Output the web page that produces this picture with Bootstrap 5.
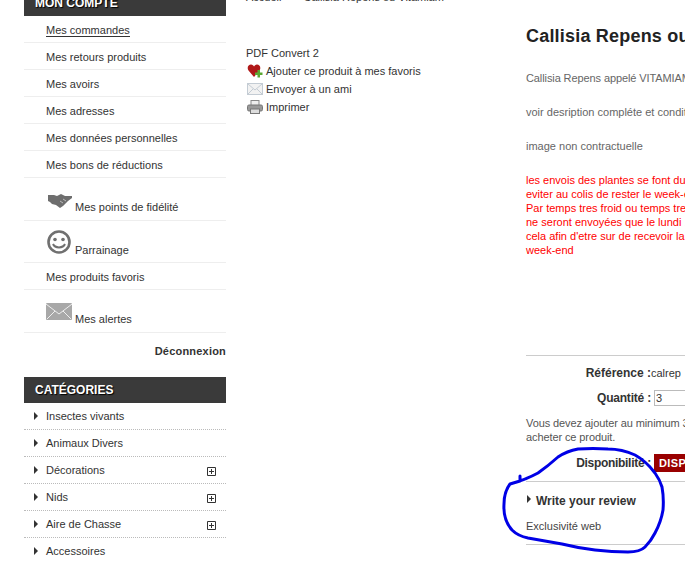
<!DOCTYPE html>
<html lang="fr">
<head>
  <meta charset="UTF-8">
  <title>Callisia Repens</title>
  <link rel="stylesheet" href="https://cdn.jsdelivr.net/npm/bootstrap@5.3.0/dist/css/bootstrap.min.css">
  <style>
    html, body { height: 561px; overflow: hidden; }
    body {
      font-family: "Liberation Sans", Arial, sans-serif;
      font-size: 11px;
      color: #333;
      background: #fff;
    }
    a { color: #333; text-decoration: none; }
    .page-wrap { margin-top: -10px; padding-left: 24px; width: 900px; }
    .side-col { width: 202px; flex: none; }
    .center-col { width: 280px; flex: none; margin-left: 20px; }
    .main-col { width: 400px; flex: none; }
    .block-head {
      background: #3a3a3a;
      color: #fff;
      font-size: 12px;
      font-weight: 700;
      height: 26px;
      line-height: 26px;
      padding-left: 11px;
      text-shadow: 1px 1px 1px #000;
    }
    .acct-row {
      height: 27px;
      line-height: 28px;
      padding-left: 22px;
      border-bottom: 1px solid #eee;
    }
    .acct-row.current a { border-bottom: 1px solid #333; }
    .acct-icon { height: 43px; display: flex; align-items: flex-end; line-height: 1; padding-bottom: 7px; }
    .acct-icon svg { margin-right: 3px; flex: none; }
    .acct-hand { margin-bottom: 5px; margin-left: 2px; margin-right: 3px !important; }
    .acct-smile { height: 42px; padding-bottom: 6px; }
    .acct-smile svg { margin-bottom: 2px; }
    .acct-mail svg { margin-bottom: 5px; }
    .logout { height: 44px; padding-top: 10px; text-align: right; font-weight: 700; letter-spacing: .2px; }
    .cat-row {
      height: 27px;
      line-height: 26px;
      padding-left: 22px;
      border-bottom: 1px dotted #bbb;
      position: relative;
    }
    .cat-row:last-child { border-bottom: 0; }
    .cat-row::before {
      content: "";
      position: absolute;
      left: 10px;
      top: 9px;
      border-left: 4px solid #333;
      border-top: 4px solid transparent;
      border-bottom: 4px solid transparent;
    }
    .cat-plus { position: absolute; left: 183px; top: 10px; }
    .crumb { height: 17px; line-height: 14px; white-space: nowrap; color: #333; }
    .crumb span { margin-left: 22px; }
    .tools { margin-top: 37px; line-height: 18px; }
    .tools > div { height: 18px; display: flex; align-items: center; }
    .tools svg { width: 16px; margin: 0 3px 0 1px; flex: none; }
    .prod-title { font-size: 18px; font-weight: 700; color: #222; margin: 33px 0 0; line-height: 26px; letter-spacing: .2px; white-space: nowrap; }
    .prod-txt { color: #666; line-height: 14px; height: 34px; white-space: nowrap; margin: 0; }
    .prod-first { margin-top: 22px; letter-spacing: -.1px; }
    .prod-red { color: #f00; line-height: 14px; white-space: nowrap; margin: 0; height: 84px; }
    .sep { border-top: 1px solid #ccc; }
    .sep-top { margin-top: 98px; }
    .field-line { display: flex; align-items: center; }
    .field-label { width: 125px; flex: none; text-align: right; font-size: 12px; font-weight: 700; color: #333; }
    .field-ref { margin-top: 9px; height: 16px; }
    .field-qty { margin-top: 8px; height: 18px; }
    .field-qty .field-label { letter-spacing: -.2px; }
    .field-stock { margin-top: 10px; height: 18px; }
    .field-stock .field-label { letter-spacing: -.3px; }
    .min-note { margin-top: 9px; line-height: 14px; white-space: nowrap; color: #555; letter-spacing: -.1px; }
    .qty-box { width: 100px; height: 16px; border: 1px solid #bbb; font: 11px "Liberation Sans", Arial, sans-serif; padding: 0 1px; margin-left: 3px; color: #333; }
    .stock-tag { background: #990000; color: #fff; font-weight: 700; height: 18px; line-height: 18px; padding: 0 5px; margin-left: 3px; letter-spacing: .4px; }
    .sep-mid { margin-top: 9px; }
    .review-head { font-size: 12px; font-weight: 700; color: #333; position: relative; padding-left: 10px; margin-top: 10px; }
    .review-head::before {
      content: "";
      position: absolute;
      left: 1px;
      top: 3px;
      border-left: 4px solid #333;
      border-top: 4px solid transparent;
      border-bottom: 4px solid transparent;
    }
    .web-note { margin-top: 8px; color: #444; }
    .sep-end { margin-top: 9px; }
    .scribble { position: absolute; left: 0; top: 0; pointer-events: none; }
  </style>
</head>
<body>

  <div class="page-wrap d-flex align-items-start">

    <!-- Left column -->
    <div class="side-col">
      <div class="block-head">MON COMPTE</div>
      <div class="acct-row current"><a href="#">Mes commandes</a></div>
      <div class="acct-row"><a href="#">Mes retours produits</a></div>
      <div class="acct-row"><a href="#">Mes avoirs</a></div>
      <div class="acct-row"><a href="#">Mes adresses</a></div>
      <div class="acct-row"><a href="#">Mes données personnelles</a></div>
      <div class="acct-row"><a href="#">Mes bons de réductions</a></div>
      <div class="acct-row acct-icon">
        <svg class="acct-hand" width="24" height="14" viewBox="0 0 24 14"><path d="M0 1h6l3 1 4-2 4 2h7v2l-4 3-5 5-3 2-4-3-4-1-2-2-2-1z" fill="#6e6e6e"/><path d="M12 7l3 2M15 5l3 2" stroke="#bbb"/></svg>
        <a href="#">Mes points de fidélité</a>
      </div>
      <div class="acct-row acct-icon acct-smile">
        <svg width="26" height="24" viewBox="0 0 26 24"><circle cx="13" cy="12" r="10.500" fill="none" stroke="#707070" stroke-width="2.600"/><circle cx="9" cy="9.500" r="1.800" fill="#707070"/><circle cx="17" cy="9.500" r="1.800" fill="#707070"/><path d="M7 14c2 4.500 10 4.500 12 0" fill="none" stroke="#707070" stroke-width="2"/></svg>
        <a href="#">Parrainage</a>
      </div>
      <div class="acct-row"><a href="#">Mes produits favoris</a></div>
      <div class="acct-row acct-icon acct-mail">
        <svg width="26" height="17" viewBox="0 0 26 17"><rect width="26" height="17" rx="1" fill="#a8a8a8"/><path d="M0 1l13 10L26 1M1 16l8-8M25 16l-8-8" fill="none" stroke="#eee"/></svg>
        <a href="#">Mes alertes</a>
      </div>
      <div class="logout"><a href="#">Déconnexion</a></div>

      <div class="block-head">CATÉGORIES</div>
      <div class="cat-row"><a href="#">Insectes vivants</a></div>
      <div class="cat-row"><a href="#">Animaux Divers</a></div>
      <div class="cat-row"><a href="#">Décorations</a><svg class="cat-plus" width="9" height="9" viewBox="0 0 9 9"><path d="M.5.5h8v8h-8zM4.500 2v5M2 4.500h5" fill="none" stroke="#333"/></svg></div>
      <div class="cat-row"><a href="#">Nids</a><svg class="cat-plus" width="9" height="9" viewBox="0 0 9 9"><path d="M.5.5h8v8h-8zM4.500 2v5M2 4.500h5" fill="none" stroke="#333"/></svg></div>
      <div class="cat-row"><a href="#">Aire de Chasse</a><svg class="cat-plus" width="9" height="9" viewBox="0 0 9 9"><path d="M.5.5h8v8h-8zM4.500 2v5M2 4.500h5" fill="none" stroke="#333"/></svg></div>
      <div class="cat-row"><a href="#">Accessoires</a></div>
    </div>

    <!-- Center column -->
    <div class="center-col">
      <div class="crumb">Accueil<span>Callisia Repens ou Vitamiam</span></div>
      <div class="tools">
        <div>PDF Convert 2</div>
        <div>
          <svg height="14" viewBox="0 0 16 14"><path d="M7 13L1.500 6.500C-.5 3.500 1.500.5 4 .5c1.500 0 2.500 1 3 2 .5-1 1.500-2 3-2 2.500 0 4.500 3 2.500 6z" fill="#b01818"/><path d="M10.500 6h2.500v2.500h2.500V11H13v2.500h-2.500V11H8V8.500h2.500z" fill="#5aa832"/></svg>
          <a href="#">Ajouter ce produit à mes favoris</a>
        </div>
        <div>
          <svg height="12" viewBox="0 0 16 12"><rect x=".5" y=".5" width="15" height="11" fill="#f2f2f2" stroke="#c4ccd4"/><path d="M1 1l7 6 7-6M1 11l5-5M15 11l-5-5" fill="none" stroke="#c4ccd4"/></svg>
          <a href="#">Envoyer à un ami</a>
        </div>
        <div>
          <svg height="14" viewBox="0 0 16 14"><rect x="4" y=".5" width="8" height="5" fill="#eee" stroke="#888"/><rect x=".5" y="5" width="15" height="6" rx="1.500" fill="#999" stroke="#777"/><rect x="3.500" y="9" width="9" height="4.500" fill="#ddd" stroke="#777"/></svg>
          <a href="#">Imprimer</a>
        </div>
      </div>
    </div>

    <!-- Product column -->
    <div class="main-col">
      <h1 class="prod-title">Callisia Repens ou Vitamiam</h1>
      <p class="prod-txt prod-first">Callisia Repens appelé VITAMIAM ou plante de vie</p>
      <p class="prod-txt">voir desription compléte et conditions de culture</p>
      <p class="prod-txt">image non contractuelle</p>
      <p class="prod-red">les envois des plantes se font du lundi au mercredi afin de<br>eviter au colis de rester le week-end en poste<br>Par temps tres froid ou temps tres chaud les plantes<br>ne seront envoyées que le lundi , merci de commander<br>cela afin d'etre sur de recevoir la plante avant le<br>week-end</p>
      <div class="sep sep-top"></div>
      <div class="field-line field-ref"><span class="field-label">Référence :</span><span>calrep</span></div>
      <div class="field-line field-qty"><span class="field-label">Quantité :</span><input class="qty-box" type="text" value="3"></div>
      <div class="min-note">Vous devez ajouter au minimum 3 quantités pour<br>acheter ce produit.</div>
      <div class="field-line field-stock"><span class="field-label">Disponibilité :</span><span class="stock-tag">DISPONIBLE</span></div>
      <div class="sep sep-mid"></div>
      <div class="review-head">Write your review</div>
      <div class="web-note">Exclusivité web</div>
      <div class="sep sep-end"></div>
    </div>
  </div>

  <!-- Hand drawn circle over the review block -->
  <svg class="scribble" width="685" height="561" viewBox="0 0 685 561">
    <path d="M520 476V481L510 484Q504 492 504 504Q503 520 512 530Q518 536 528 538Q545 541 562 544Q578 548 595 550Q612 552 628 552Q640 552 645 547Q651 541 655 533Q661 522 663 510Q664 498 662 487Q660 480 655 473Q646 461 635 455Q622 449 608 449Q593 448 578 449Q567 451 558 457Q548 466 538 473Q525 480 510 484" fill="none" stroke="#0000e6" stroke-width="3" stroke-linecap="round" stroke-linejoin="round"/>
  </svg>

  <script src="https://cdn.jsdelivr.net/npm/bootstrap@5.3.0/dist/js/bootstrap.bundle.min.js"></script>
</body>
</html>
